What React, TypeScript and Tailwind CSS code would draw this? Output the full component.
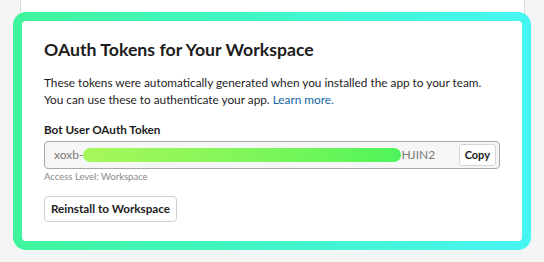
export default function App() {
  return (
    <div
      className="grid w-[544px] h-[262px] overflow-hidden bg-[#f5f5f5] text-[#1d1c1d]"
      style={{ fontFamily: "Lato, 'Open Sans', sans-serif" }}
    >
      {/* page card behind the highlight */}
      <div className="col-start-1 row-start-1 self-start justify-self-start ml-[20px] w-[505px] h-[246px] bg-white border-x border-[#dddddd]" />

      {/* highlighted section */}
      <div className="col-start-1 row-start-1 self-start justify-self-start ml-[13px] mt-[12px] w-[518px] h-[238px] rounded-[13px] bg-gradient-to-r from-[#3ff59b] to-[#47f5f2] p-[9px]">
        <div className="h-full rounded-[4px] bg-white pl-[22px] pr-[21px] pt-[17px]">
          <h1 className="text-[17.7px] leading-[24px] font-bold whitespace-nowrap">OAuth Tokens for Your Workspace</h1>
          <p className="mt-[12px] text-[11.8px] leading-[17px] whitespace-nowrap">
            These tokens were automatically generated when you installed the app to your team.
            <br />
            You can use these to authenticate your app.{" "}
            <span className="text-[#1264a3]">Learn more.</span>
          </p>

          <div className="mt-[13px] text-[11.7px] leading-[16px] font-bold">Bot User OAuth Token</div>

          {/* token field */}
          <div className="mt-[4px] flex items-center h-[28px] w-[456px] rounded-[4px] border border-[#a8a8a8] bg-[#f6f6f6] pl-[9px] pr-[3px]">
            <span className="text-[12px] text-[#7a7a7a]">xoxb-</span>
            <span className="h-[14px] w-[318px] rounded-full bg-gradient-to-r from-[#a6f75a] to-[#4cf55a]" />
            <span className="text-[12px] text-[#7a7a7a]">HJIN2</span>
            <button className="ml-auto h-[22px] px-[5px] rounded-[3px] border border-[#d6d6d6] bg-white text-[11px] font-bold">
              Copy
            </button>
          </div>
          <div className="mt-[1px] text-[9.5px] leading-[14px] text-[#8a8a8a]">Access Level: Workspace</div>

          <button className="mt-[12px] h-[26px] w-[133px] rounded-[4px] border border-[#cfcfcf] bg-white text-[11.7px] font-bold">
            Reinstall to Workspace
          </button>
        </div>
      </div>
    </div>
  );
}
